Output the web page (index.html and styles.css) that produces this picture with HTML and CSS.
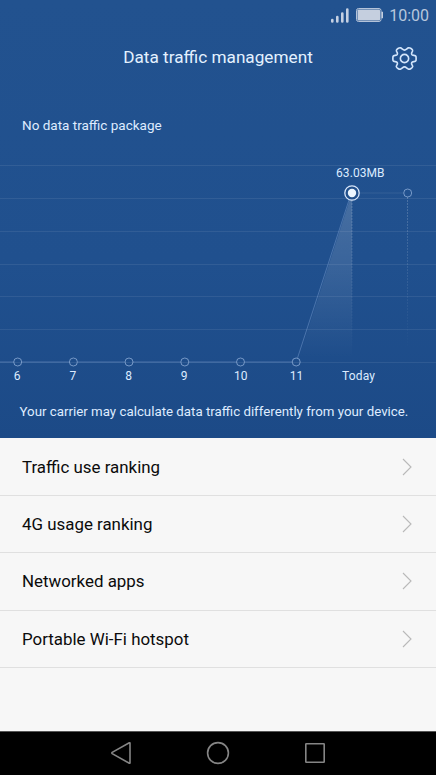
FILE: index.html
```html
<!DOCTYPE html>
<html lang="en">
<head>
<meta charset="utf-8">
<title>Data traffic management</title>
<link rel="stylesheet" href="styles.css">
</head>
<body>
<main class="screen">
  <section class="hero">
    <div class="status">
      <svg class="signal" width="18" height="15" viewBox="0 0 18 15"><path d="M1.300 13.500v-1.500M6.300 13.500V9M11.300 13.500V5.500M16.300 13.500V1.500"/></svg>
      <svg class="battery" width="27" height="14" viewBox="0 0 27 14"><rect class="shell" x=".5" y=".5" width="24.500" height="13" rx="2"/><rect class="charge" x="1.500" y="1.500" width="22.500" height="11" rx=".8"/><path class="charge" d="M25.500 3.800h1.500v6.400h-1.500z"/></svg>
      <span class="clock">10:00</span>
    </div>
    <header class="bar">
      <h1>Data traffic management</h1>
      <svg class="gear" width="25" height="25" viewBox="-13 -13 26 26"><path d="M0-8.700C1.700-8.700 2.900-10.900 4.200-11.100C5.700-11.300 8.200-9.800 8.500-8.400C8.800-7.200 6.700-6.100 7.500-4.400C8.300-2.800 11.200-3.800 11.900-2.200Q12.300 0 11.900 2.200C11.200 3.800 8.300 2.800 7.500 4.400C6.700 6.100 8.800 7.200 8.500 8.400C8.200 9.800 5.700 11.300 4.200 11.100C2.900 10.900 1.700 8.700 0 8.700C-1.700 8.700-2.900 10.900-4.200 11.100C-5.700 11.300-8.200 9.800-8.500 8.400C-8.800 7.200-6.700 6.100-7.500 4.400C-8.300 2.800-11.200 3.800-11.900 2.200Q-12.300 0-11.900-2.200C-11.200-3.800-8.300-2.800-7.500-4.400C-6.700-6.100-8.800-7.200-8.500-8.400C-8.200-9.800-5.700-11.300-4.200-11.100C-2.900-10.900-1.700-8.700 0-8.700Z"/><circle r="4.300"/></svg>
    </header>
    <p class="package">No data traffic package</p>
    <svg class="chart" width="436" height="240" viewBox="0 150 436 240">
      <defs>
        <linearGradient id="area" x1="0" y1="193" x2="0" y2="358" gradientUnits="userSpaceOnUse"><stop offset="0" stop-color="#fff" stop-opacity=".18"/><stop offset=".4" stop-color="#fff" stop-opacity=".12"/><stop offset="1" stop-color="#fff" stop-opacity="0"/></linearGradient>
        <linearGradient id="drop" x1="0" y1="193" x2="0" y2="350" gradientUnits="userSpaceOnUse"><stop offset="0" stop-color="#fff" stop-opacity=".2"/><stop offset="1" stop-color="#fff" stop-opacity="0"/></linearGradient>
      </defs>
      <path class="grid" d="M0 165.500H436M0 198.500H436M0 231.500H436M0 264.500H436M0 296.500H436M0 329.500H436M0 362.500H436"/>
      <path fill="url(#area)" d="M352 193V362H297.500Z"/>
      <path class="drop" d="M352 200L352.010 350M407.500 197L407.510 350"/>
      <path class="future" d="M360 193H403"/>
      <path class="line" d="M0 362H13.500M22 362H69M78 362H124.500M133 362H180.500M189 362H236M245 362H292M297.500 358L349 200"/>
      <g class="points"><circle cx="17.700" cy="362" r="4"/><circle cx="73.400" cy="362" r="4"/><circle cx="129" cy="362" r="4"/><circle cx="184.800" cy="362" r="4"/><circle cx="240.500" cy="362" r="4"/><circle cx="296.200" cy="362" r="4"/><circle cx="407.700" cy="193" r="4"/></g>
      <circle class="ring" cx="352" cy="193" r="7.200"/><circle class="dot" cx="352" cy="193" r="4.200"/>
      <g class="labels"><text x="17.200" y="380">6</text><text x="72.800" y="380">7</text><text x="128.700" y="380">8</text><text x="184.200" y="380">9</text><text x="240.700" y="380">10</text><text x="296.500" y="380">11</text><text x="358.500" y="380" textLength="33">Today</text><text x="360.300" y="177" textLength="48.500">63.03MB</text></g>
    </svg>
    <p class="note">Your carrier may calculate data traffic differently from your device.</p>
  </section>
  <nav class="menu">
    <a class="row"><span>Traffic use ranking</span><svg width="10" height="18" viewBox="0 0 10 18"><path d="M1 1l8 8-8 8"/></svg></a>
    <a class="row"><span>4G usage ranking</span><svg width="10" height="18" viewBox="0 0 10 18"><path d="M1 1l8 8-8 8"/></svg></a>
    <a class="row"><span>Networked apps</span><svg width="10" height="18" viewBox="0 0 10 18"><path d="M1 1l8 8-8 8"/></svg></a>
    <a class="row"><span>Portable Wi-Fi hotspot</span><svg width="10" height="18" viewBox="0 0 10 18"><path d="M1 1l8 8-8 8"/></svg></a>
  </nav>
  <footer class="keys">
    <svg width="24" height="24" viewBox="0 0 24 24"><path d="M21 2.200V21.800Q21 22.500 20.300 22.200L3.200 12.600Q2.500 12 3.200 11.400L20.300 1.800Q21 1.500 21 2.200Z"/></svg>
    <svg width="24" height="24" viewBox="0 0 24 24"><circle cx="12" cy="12" r="10.400"/></svg>
    <svg width="24" height="24" viewBox="0 0 24 24"><rect x="2.800" y="2.800" width="18.400" height="18.400" rx=".5"/></svg>
  </footer>
</main>
</body>
</html>
```
FILE: styles.css
```css
* { box-sizing: border-box; margin: 0; padding: 0; }
body { font-family: Roboto, "Liberation Sans", sans-serif; background: #f7f7f7; overflow: hidden; }
svg { display: block; fill: none; flex: none; }
.screen { width: 436px; height: 775px; display: flex; flex-direction: column; }
.hero { height: 438px; flex: none; background: linear-gradient(#22528f 0, #20508e 60%, #1c4a87 100%); color: #dfecff; overflow: hidden; }
.status { height: 30px; display: flex; align-items: center; justify-content: flex-end; padding-right: 7px; }
.signal { stroke: #c5d1e3; stroke-width: 2.6; stroke-linecap: round; margin-right: 7px; }
.battery { margin-right: 6px; }
.shell { stroke: #b4c3d9; stroke-width: 1; }
.charge { fill: #c5cfdf; }
.clock { font-size: 16px; line-height: 30px; color: #b7c7dd; position: relative; top: 1px; }
.bar { height: 56px; display: grid; grid-template-columns: 44px 1fr 44px; align-items: center; }
.bar h1 { grid-column: 2; font-size: 17.2px; font-weight: 400; text-align: center; color: #e4f1ff; padding-bottom: 2px; }
.gear { stroke: #d3e5fb; stroke-width: 1.7; }
.package { margin-top: 28px; height: 36px; padding-left: 22px; font-size: 13.5px; line-height: 23px; }
.chart { overflow: visible; }
.grid { stroke: #fff; stroke-opacity: .08; }
.drop { stroke: url(#drop); stroke-dasharray: 2 1; }
.line { stroke: #8caddb; stroke-opacity: .4; }
.future { stroke: #fff; stroke-opacity: .06; stroke-width: 1.5; }
.points { stroke: #a3bfe5; stroke-opacity: .65; }
.ring { fill: #22508c; stroke: #d8e6fa; stroke-width: 1.3; }
.dot { fill: #edf6ff; }
.labels { fill: #dcebff; font-size: 12px; text-anchor: middle; }
.note { margin-top: 10px; padding-left: 19.5px; font-size: 13.3px; line-height: 23px; white-space: nowrap; }
.menu { flex: 1; padding-top: 1px; background: #f7f7f7; }
.row { height: 57.2px; display: flex; align-items: center; justify-content: space-between; padding: 0 24px 0 22px; border-bottom: 1px solid #e0e0e0; font-size: 16.9px; color: #0b0b0b; }
.row svg { stroke: #b9b9b9; stroke-width: 1.1; }
.keys { height: 44px; flex: none; background: #000; border-top: 1px solid #555; padding-bottom: 1px; display: flex; align-items: center; justify-content: center; gap: 73px; }
.keys svg { stroke: #858585; stroke-width: 1.6; }
```
